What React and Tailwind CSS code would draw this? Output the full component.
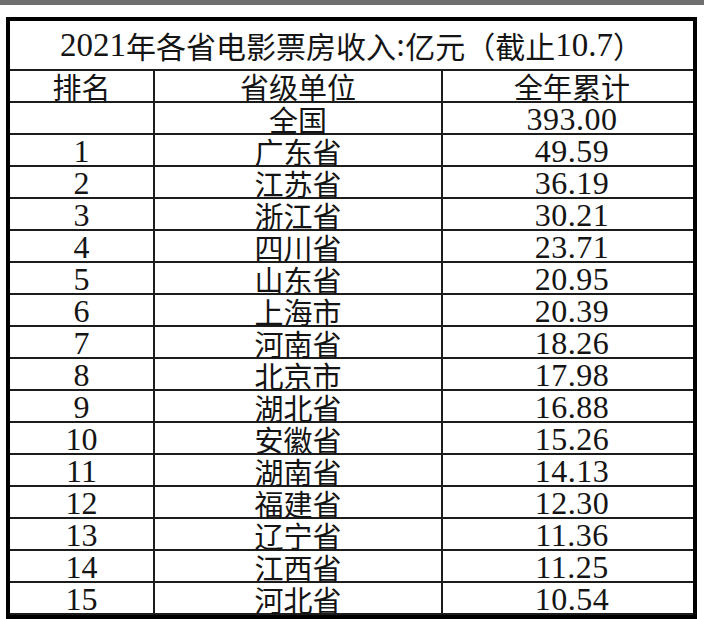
const rows = [
  ['1', '广东省', '49.59'],
  ['2', '江苏省', '36.19'],
  ['3', '浙江省', '30.21'],
  ['4', '四川省', '23.71'],
  ['5', '山东省', '20.95'],
  ['6', '上海市', '20.39'],
  ['7', '河南省', '18.26'],
  ['8', '北京市', '17.98'],
  ['9', '湖北省', '16.88'],
  ['10', '安徽省', '15.26'],
  ['11', '湖南省', '14.13'],
  ['12', '福建省', '12.30'],
  ['13', '辽宁省', '11.36'],
  ['14', '江西省', '11.25'],
  ['15', '河北省', '10.54'],
];

const serif = "font-['Liberation_Serif','Times_New_Roman',serif] text-[32px]";
const cjk = "font-['Noto_Sans_CJK_SC',sans-serif] text-[29px]";

function Row({ rank, name, total }) {
  return (
    <div className="grid grid-cols-[145px_288px_1fr] h-[32px] border-b-2 border-[#1c1c1c] leading-none text-[#141414]">
      <div className={`flex items-center justify-center border-r-2 border-[#1c1c1c] ${serif}`}>{rank}</div>
      <div className={`flex items-center justify-center border-r-2 border-[#1c1c1c] ${cjk}`}>{name}</div>
      <div className={`flex items-center justify-center pl-[8px] tracking-[0.5px] ${serif}`}>{total}</div>
    </div>
  );
}

export default function App() {
  return (
    <div className="w-[704px] h-[619px] overflow-hidden bg-white">
      <div className="h-[5px] bg-[#6f6f6f]" />
      <div className="ml-[6px] mt-[12px] w-[691px] border-4 border-black">
        {/* title */}
        <div className="h-[50px] flex items-center justify-center border-b-2 border-[#1c1c1c] leading-none text-[#141414] font-['Noto_Sans_CJK_SC',sans-serif] text-[30px]">
          <span className="font-['Liberation_Serif','Times_New_Roman',serif] text-[33px]">2021</span>
          <span>年各省电影票房收入</span>
          <span className="font-['Liberation_Serif','Times_New_Roman',serif] text-[33px]">:</span>
          <span>亿元（截止</span>
          <span className="font-['Liberation_Serif','Times_New_Roman',serif] text-[33px]">10.7</span>
          <span>）</span>
        </div>

        {/* header */}
        <div className={`grid grid-cols-[145px_288px_1fr] h-[32px] border-b-2 border-[#1c1c1c] leading-none text-[#141414] ${cjk}`}>
          <div className="flex items-center justify-center border-r-2 border-[#1c1c1c]">排名</div>
          <div className="flex items-center justify-center border-r-2 border-[#1c1c1c]">省级单位</div>
          <div className="flex items-center justify-center pl-[8px]">全年累计</div>
        </div>

        <Row rank="" name="全国" total="393.00" />
        {rows.map(r => (
          <Row key={r[0]} rank={r[0]} name={r[1]} total={r[2]} />
        ))}
      </div>
    </div>
  );
}
